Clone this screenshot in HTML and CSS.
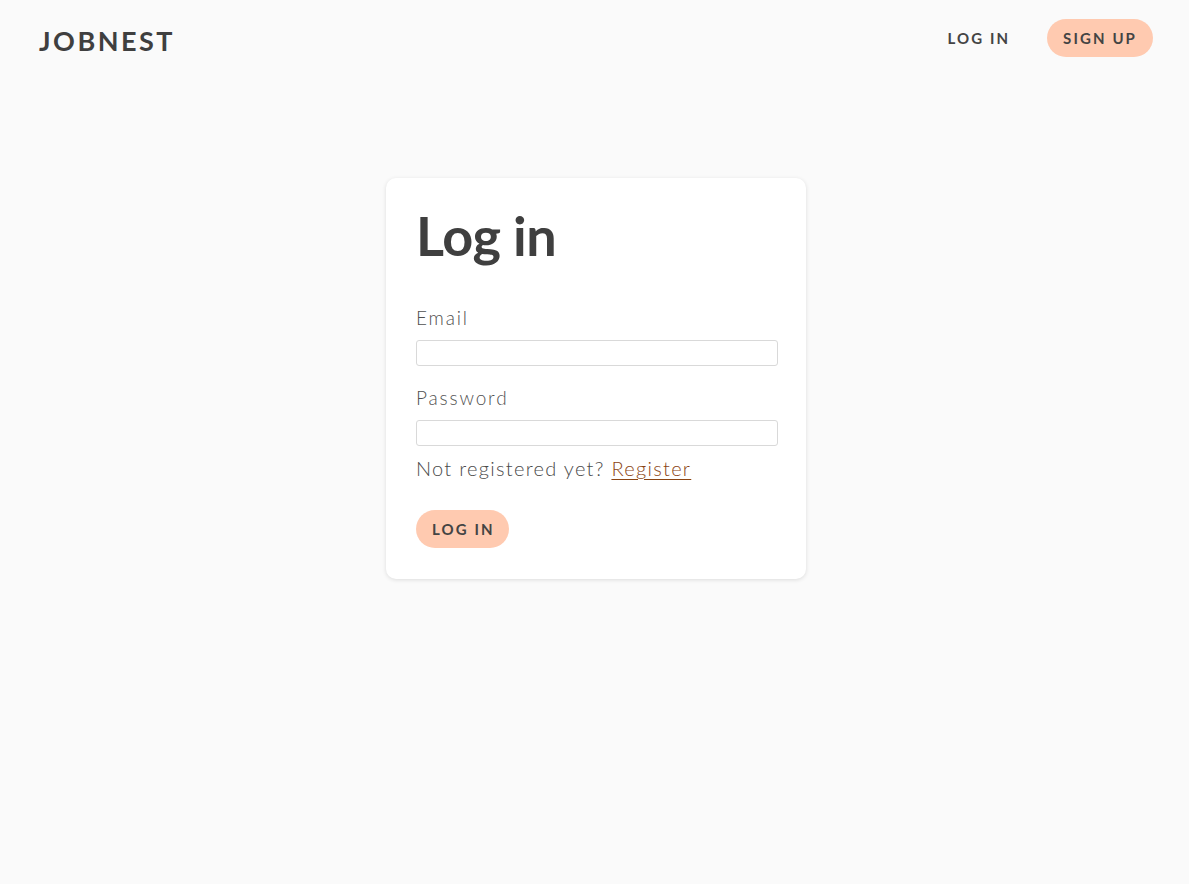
FILE: index.html
```html
<!DOCTYPE html>
<html lang="en">
<head>
<meta charset="utf-8">
<title>JobNest – Log in</title>
<link rel="stylesheet" href="styles.css">
</head>
<body>
<header class="topbar">
  <a class="logo" href="#">JOBNEST</a>
  <nav class="nav">
    <a class="btn btn-plain" href="#">LOG IN</a>
    <a class="btn btn-peach" href="#">SIGN UP</a>
  </nav>
</header>
<main class="page">
  <form class="card">
    <h1 class="title">Log in</h1>
    <label class="label" for="email">Email</label>
    <input class="input input-first" id="email" type="email">
    <label class="label" for="password">Password</label>
    <input class="input" id="password" type="password">
    <p class="hint">Not registered yet? <a class="link" href="#">Register</a></p>
    <button class="btn btn-peach btn-submit" type="button">LOG IN</button>
  </form>
</main>
</body>
</html>
```
FILE: styles.css
```css
* { box-sizing: border-box; }

html, body {
  margin: 0;
  padding: 0;
  background: #fafafa;
  color: #444;
  font-family: "Lato", "Noto Sans", sans-serif;
}

body { min-height: 884px; }

a { text-decoration: none; color: inherit; }

.topbar {
  display: flex;
  justify-content: space-between;
  align-items: center;
  padding: 19px 36px 0 39px;
}

.logo {
  font-size: 27px;
  line-height: 27px;
  font-weight: 700;
  letter-spacing: 2.5px;
  color: #3f3f3f;
  padding-top: 5px;
}

.nav {
  display: flex;
  align-items: center;
  gap: 21px;
}

.btn {
  display: inline-block;
  height: 38px;
  line-height: 38px;
  padding: 0 16px;
  border-radius: 19px;
  border: 0;
  font-family: inherit;
  font-size: 15px;
  font-weight: 700;
  letter-spacing: 2.1px;
  color: #444;
  cursor: pointer;
}

.btn-plain { background: transparent; }
.btn-peach { background: #ffcab0; }

.page {
  padding: 121px 0 0 3px;
  display: flex;
  justify-content: center;
}

.card {
  width: 420px;
  background: #fff;
  border-radius: 10px;
  box-shadow: 0 1px 4px rgba(0, 0, 0, 0.12);
  padding: 31px 30px 31px 30px;
  display: flex;
  flex-direction: column;
  align-items: flex-start;
}

.title {
  margin: 0;
  font-size: 54px;
  line-height: 54px;
  font-weight: 700;
  color: #3f3f3f;
  letter-spacing: -0.5px;
}

.label {
  display: block;
  margin-top: 43px;
  font-size: 19px;
  line-height: 24px;
  font-weight: 300;
  letter-spacing: 1.85px;
  color: #505050;
}

.input-first + .label { margin-top: 20px; }

.input {
  display: block;
  margin-top: 10px;
  width: calc(100% + 2px);
  height: 26px;
  border: 1px solid #d9d9d9;
  border-radius: 3px;
  background: #fff;
  font-family: inherit;
  font-size: 15px;
  padding: 0 6px;
}

.hint {
  margin: 10px 0 0;
  font-size: 20px;
  line-height: 24px;
  font-weight: 300;
  letter-spacing: 1.3px;
  color: #4a4a4a;
}

.link {
  color: #8b4513;
  text-decoration: underline;
  text-underline-offset: 3px;
  text-decoration-thickness: 1px;
}

.btn-submit {
  margin-top: 30px;
  padding: 0 14px 0 16px;
}
```
